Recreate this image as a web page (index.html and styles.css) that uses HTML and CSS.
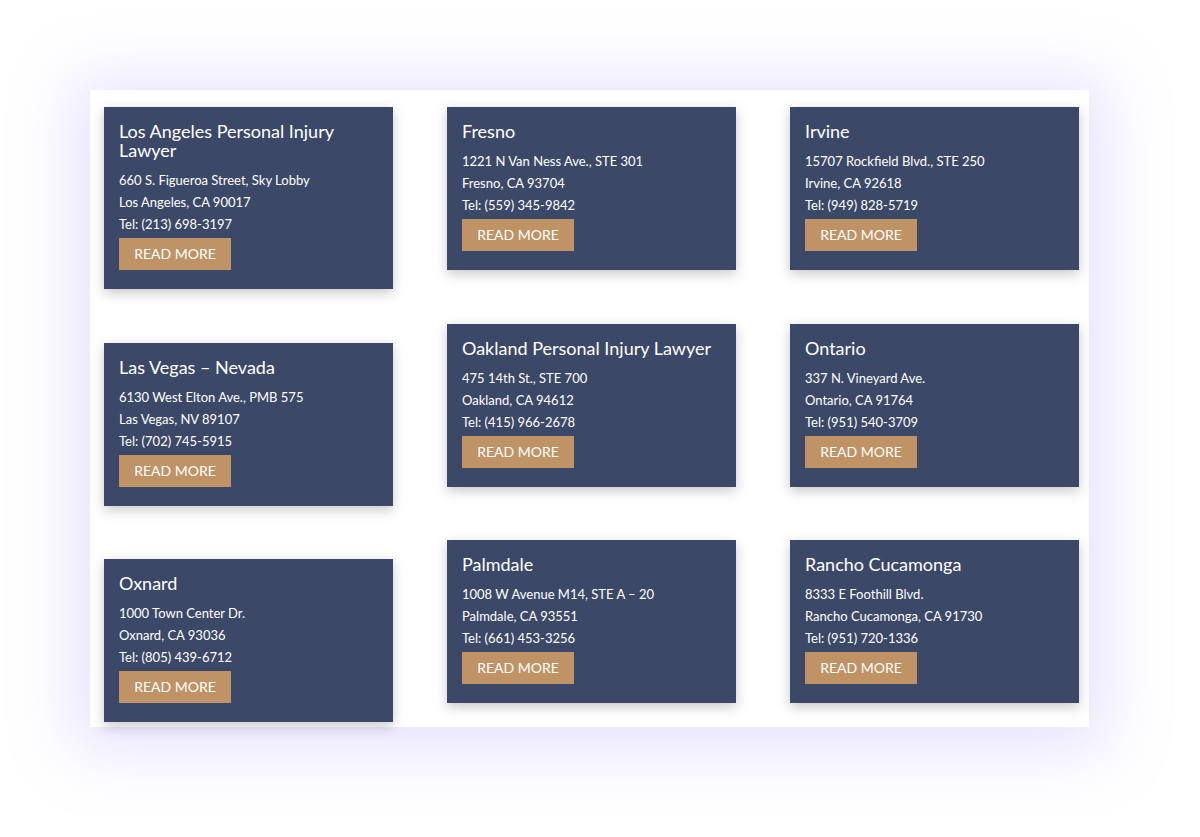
FILE: index.html
```html
<!DOCTYPE html>
<html lang="en">
<head>
  <meta charset="UTF-8">
  <title>Office Locations</title>
  <link rel="stylesheet" href="styles.css">
</head>
<body>

  <div class="painel">
    <div class="coluna">
      <div class="escritorio">
        <h3>Los Angeles Personal Injury Lawyer</h3>
        <p>660 S. Figueroa Street, Sky Lobby</p>
        <p>Los Angeles, CA 90017</p>
        <p>Tel: (213) 698-3197</p>
        <a href="#" class="btn-mais">READ MORE</a>
      </div>
      <div class="escritorio">
        <h3>Las Vegas – Nevada</h3>
        <p>6130 West Elton Ave., PMB 575</p>
        <p>Las Vegas, NV 89107</p>
        <p>Tel: (702) 745-5915</p>
        <a href="#" class="btn-mais">READ MORE</a>
      </div>
      <div class="escritorio">
        <h3>Oxnard</h3>
        <p>1000 Town Center Dr.</p>
        <p>Oxnard, CA 93036</p>
        <p>Tel: (805) 439-6712</p>
        <a href="#" class="btn-mais">READ MORE</a>
      </div>
    </div>

    <div class="coluna">
      <div class="escritorio">
        <h3>Fresno</h3>
        <p>1221 N Van Ness Ave., STE 301</p>
        <p>Fresno, CA 93704</p>
        <p>Tel: (559) 345-9842</p>
        <a href="#" class="btn-mais">READ MORE</a>
      </div>
      <div class="escritorio">
        <h3>Oakland Personal Injury Lawyer</h3>
        <p>475 14th St., STE 700</p>
        <p>Oakland, CA 94612</p>
        <p>Tel: (415) 966-2678</p>
        <a href="#" class="btn-mais">READ MORE</a>
      </div>
      <div class="escritorio">
        <h3>Palmdale</h3>
        <p>1008 W Avenue M14, STE A – 20</p>
        <p>Palmdale, CA 93551</p>
        <p>Tel: (661) 453-3256</p>
        <a href="#" class="btn-mais">READ MORE</a>
      </div>
    </div>

    <div class="coluna">
      <div class="escritorio">
        <h3>Irvine</h3>
        <p>15707 Rockfield Blvd., STE 250</p>
        <p>Irvine, CA 92618</p>
        <p>Tel: (949) 828-5719</p>
        <a href="#" class="btn-mais">READ MORE</a>
      </div>
      <div class="escritorio">
        <h3>Ontario</h3>
        <p>337 N. Vineyard Ave.</p>
        <p>Ontario, CA 91764</p>
        <p>Tel: (951) 540-3709</p>
        <a href="#" class="btn-mais">READ MORE</a>
      </div>
      <div class="escritorio">
        <h3>Rancho Cucamonga</h3>
        <p>8333 E Foothill Blvd.</p>
        <p>Rancho Cucamonga, CA 91730</p>
        <p>Tel: (951) 720-1336</p>
        <a href="#" class="btn-mais">READ MORE</a>
      </div>
    </div>
  </div>

</body>
</html>
```

FILE: styles.css
```css
body {
  font-family: Lato, "Open Sans", sans-serif;
  background-color: #ffffff;
  margin: 0;
  padding: 90px 0 110px 90px;
}

.painel {
  width: 976px;
  height: 614px;
  padding: 17px 9px 6px 14px;
  background-color: #ffffff;
  display: flex;
  gap: 54px;
  box-shadow: 0 6px 60px 18px rgba(180, 160, 255, 0.3);
}

.coluna {
  width: 289px;
  display: flex;
  flex-direction: column;
  gap: 53.5px;
}

.escritorio {
  background-color: #3c4867;
  color: #ffffff;
  padding: 15px 15px 19px;
  box-shadow: 0 4px 12px rgba(0, 0, 0, 0.22);
}

.escritorio h3 {
  margin: 0 0 9px;
  font-size: 18px;
  line-height: 19px;
  font-weight: normal;
}

.escritorio p {
  margin: 0;
  font-size: 13px;
  line-height: 22px;
}

.btn-mais {
  display: block;
  margin-top: 3px;
  width: 112px;
  height: 32px;
  line-height: 32px;
  text-align: center;
  background-color: #bf9366;
  color: #ffffff;
  font-size: 14px;
  text-decoration: none;
}
```
